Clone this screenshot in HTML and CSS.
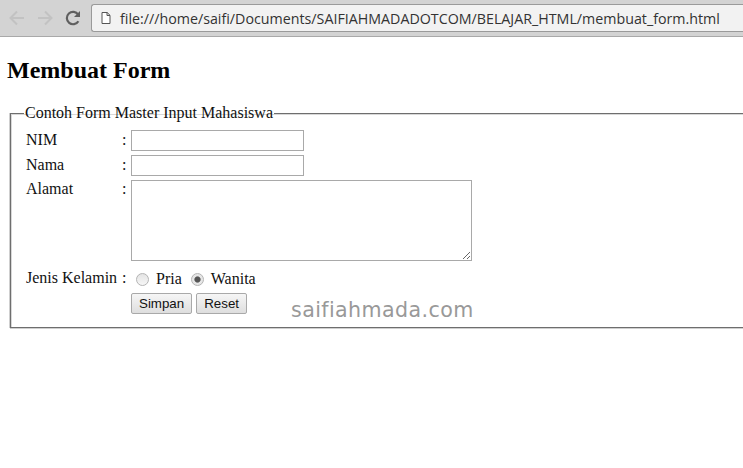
FILE: index.html
```html
<!DOCTYPE html>
<html lang="id">
<head>
<meta charset="utf-8">
<title>Membuat Form</title>
<link rel="stylesheet" href="styles.css">
</head>
<body>
<header class="toolbar">
  <svg class="nav-icon" width="20" height="20" viewBox="0 0 20 20"><path d="M17 10H4M10 3.5L3.5 10l6.5 6.5" fill="none" stroke="#c2c2c2" stroke-width="2"/></svg>
  <svg class="nav-icon" width="20" height="20" viewBox="0 0 20 20"><path d="M3 10h13M10 3.5l6.5 6.5-6.5 6.5" fill="none" stroke="#c2c2c2" stroke-width="2"/></svg>
  <svg class="nav-icon" width="20" height="20" viewBox="0 0 20 20"><path d="M15.4 13.2a6.2 6.2 0 1 1-.2-6.6" fill="none" stroke="#5f5f5f" stroke-width="2.2"/><path d="M17 3v6h-6z" fill="#5f5f5f"/></svg>
  <div class="omnibox">
    <svg class="page-icon" width="10" height="12" viewBox="0 0 10 12"><path d="M1 .5h5.2L9 3.3v8.2H1zM6 .5v3h3" fill="#fff" stroke="#555" stroke-width="1"/></svg>
    <span class="url">file:///home/saifi/Documents/SAIFIAHMADADOTCOM/BELAJAR_HTML/membuat_form.html</span>
  </div>
</header>
<main class="page">
  <h2 class="title">Membuat Form</h2>
  <form class="form">
    <fieldset class="box">
      <legend class="box-legend">Contoh Form Master Input Mahasiswa</legend>
      <div class="grid">
        <label class="lbl lbl-input">NIM</label><span class="colon lbl-input">:</span><input class="text" type="text">
        <label class="lbl lbl-input">Nama</label><span class="colon lbl-input">:</span><input class="text" type="text">
        <label class="lbl">Alamat</label><span class="colon">:</span><textarea class="area"></textarea>
        <label class="lbl lbl-gender">Jenis Kelamin</label><span class="colon colon-gender">:</span>
        <div class="radios">
          <input class="radio" type="radio" name="jk" id="p"><label for="p" class="radio-label">Pria</label>
          <input class="radio" type="radio" name="jk" id="w" checked><label for="w" class="radio-label">Wanita</label>
        </div>
        <div class="buttons">
          <button class="btn" type="button">Simpan</button>
          <button class="btn" type="reset">Reset</button>
        </div>
      </div>
    </fieldset>
  </form>
  <div class="watermark">saifiahmada.com</div>
</main>
</body>
</html>
```

FILE: styles.css
```css
html, body { margin: 0; padding: 0; height: 100%; overflow: hidden; background: #fff; }
body { font-family: "Liberation Serif", serif; font-size: 16px; color: #111; }

.toolbar {
  height: 36px;
  background: #d3d3d3;
  border-bottom: 1px solid #a9a9a9;
  display: flex;
  align-items: center;
  padding-left: 7px;
  gap: 8px;
}
.nav-icon { flex: none; }
.omnibox {
  flex: 1;
  height: 28px;
  box-sizing: border-box;
  background: #f2f2f2;
  border: 1px solid #9a9a9a;
  border-right: 0;
  border-radius: 3px 0 0 3px;
  display: flex;
  align-items: center;
  padding-left: 9px;
  gap: 9px;
}
.page-icon { flex: none; }
.url { font-family: "Open Sans", sans-serif; font-size: 14.25px; color: #333; white-space: nowrap; }

.page { position: relative; }
.title { margin: 0; padding: 20px 0 0 7px; font-size: 24px; line-height: 27px; font-weight: bold; color: #000; }
.form { margin: 20px 0 0 10px; }
.box {
  margin: 0;
  padding: 0 0 13px 15px;
  border: 1px solid #6e6e6e;
  border-right: 0;
  box-shadow: inset 1px 1px 0 #d8d8d8, 0 1px 0 #cfcfcf, -1px 0 0 #cfcfcf;
}
.box-legend { padding: 0 1px; margin-left: -2px; line-height: 18px; }
.grid {
  display: grid;
  grid-template-columns: 96px 9px auto;
  justify-content: start;
  row-gap: 4px;
  margin-top: 8px;
}
.lbl, .colon { line-height: 18px; }
.lbl-input { padding-top: 1px; }
.text {
  width: 173px; height: 21px; box-sizing: border-box;
  border: 1px solid #a9a9a9; padding: 0; margin: 0; background: #fff;
}
.area {
  display: block;
  width: 341px; height: 81px; box-sizing: border-box;
  border: 1px solid #a9a9a9; padding: 0; margin: 0; background: #fff;
}
.lbl-gender, .colon-gender { margin-top: 4px; }
.radios { display: flex; align-items: center; margin-top: 5px; height: 18px; }
.radio {
  appearance: none;
  -webkit-appearance: none;
  width: 13px; height: 13px; margin: 0 0 0 5px; flex: none;
  border: 1px solid #b4b4b4;
  border-radius: 50%;
  background: linear-gradient(#e4e4e4, #f6f6f6);
}
.radio:checked {
  background: radial-gradient(circle, #555 0 2.6px, #e6e6e6 3.6px);
}
.radio-label { margin: 0 9px 0 7px; }
.radio-label + .radio { margin-left: 0; }
.buttons { grid-column: 3; display: flex; gap: 4px; margin-top: 1px; }
.btn {
  font-family: "Liberation Sans", sans-serif;
  font-size: 13.33px;
  color: #111;
  height: 21px;
  padding: 0 7px;
  margin: 0;
  background: linear-gradient(#f6f6f6, #dedede);
  border: 1px solid #a9a9a9;
  border-radius: 2px;
}
.watermark {
  position: absolute;
  left: 291px;
  top: 261px;
  font-family: "DejaVu Sans", sans-serif;
  font-size: 20.6px;
  line-height: 24px;
  color: #999;
  letter-spacing: .4px;
}
```
